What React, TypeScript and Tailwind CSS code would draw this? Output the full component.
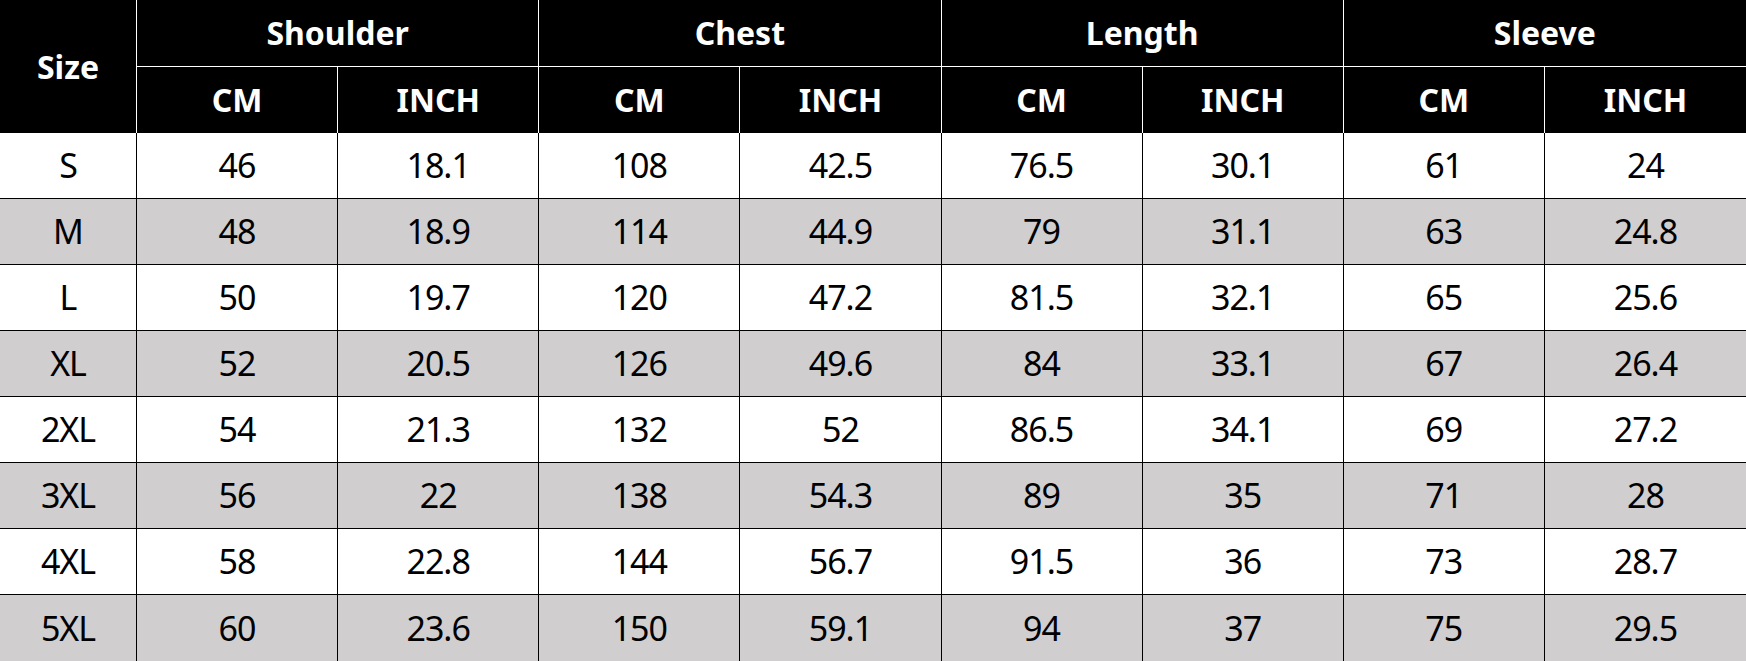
import React from "react";

type Row = { size: string; values: string[] };

const rows: Row[] = [
  { size: "S", values: ["46", "18.1", "108", "42.5", "76.5", "30.1", "61", "24"] },
  { size: "M", values: ["48", "18.9", "114", "44.9", "79", "31.1", "63", "24.8"] },
  { size: "L", values: ["50", "19.7", "120", "47.2", "81.5", "32.1", "65", "25.6"] },
  { size: "XL", values: ["52", "20.5", "126", "49.6", "84", "33.1", "67", "26.4"] },
  { size: "2XL", values: ["54", "21.3", "132", "52", "86.5", "34.1", "69", "27.2"] },
  { size: "3XL", values: ["56", "22", "138", "54.3", "89", "35", "71", "28"] },
  { size: "4XL", values: ["58", "22.8", "144", "56.7", "91.5", "36", "73", "28.7"] },
  { size: "5XL", values: ["60", "23.6", "150", "59.1", "94", "37", "75", "29.5"] },
];

const groups = ["Shoulder", "Chest", "Length", "Sleeve"];

const App = () => {
  return (
    <div
      className="w-[1746px] h-[661px] bg-white overflow-hidden"
      style={{ fontFamily: '"Noto Sans", "Open Sans", sans-serif' }}
    >
      <div className="grid grid-cols-[137px_repeat(8,1fr)] grid-rows-[67px_66px_repeat(8,66px)]">
        {/* header */}
        <div className="row-span-2 flex items-center justify-center bg-black text-white font-bold text-[32px] border-r border-white">
          Size
        </div>
        {groups.map((g, i) => (
          <div
            key={g}
            className={`col-span-2 flex items-center justify-center bg-black text-white font-bold text-[32px] border-b border-white ${
              i < groups.length - 1 ? "border-r" : ""
            }`}
          >
            {g}
          </div>
        ))}
        {groups.map((g, i) => (
          <React.Fragment key={g + "-units"}>
            <div className="flex items-center justify-center bg-black text-white font-bold text-[32px] border-r border-white">
              CM
            </div>
            <div
              className={`flex items-center justify-center bg-black text-white font-bold text-[32px] border-white ${
                i < groups.length - 1 ? "border-r" : ""
              }`}
            >
              INCH
            </div>
          </React.Fragment>
        ))}

        {/* body */}
        {rows.map((r, ri) => {
          const bg = ri % 2 === 1 ? "bg-[#d0cecf]" : "bg-white";
          const bottom = ri < rows.length - 1 ? "border-b" : "";
          return (
            <React.Fragment key={r.size}>
              <div
                className={`flex items-center justify-center text-[34px] tracking-[-1px] text-black border-r border-black ${bg} ${bottom}`}
              >
                {r.size}
              </div>
              {r.values.map((v, vi) => (
                <div
                  key={vi}
                  className={`flex items-center justify-center text-[34px] tracking-[-1px] text-black border-black ${bg} ${bottom} ${
                    vi < r.values.length - 1 ? "border-r" : ""
                  }`}
                >
                  {v}
                </div>
              ))}
            </React.Fragment>
          );
        })}
      </div>
    </div>
  );
};

export default App;
